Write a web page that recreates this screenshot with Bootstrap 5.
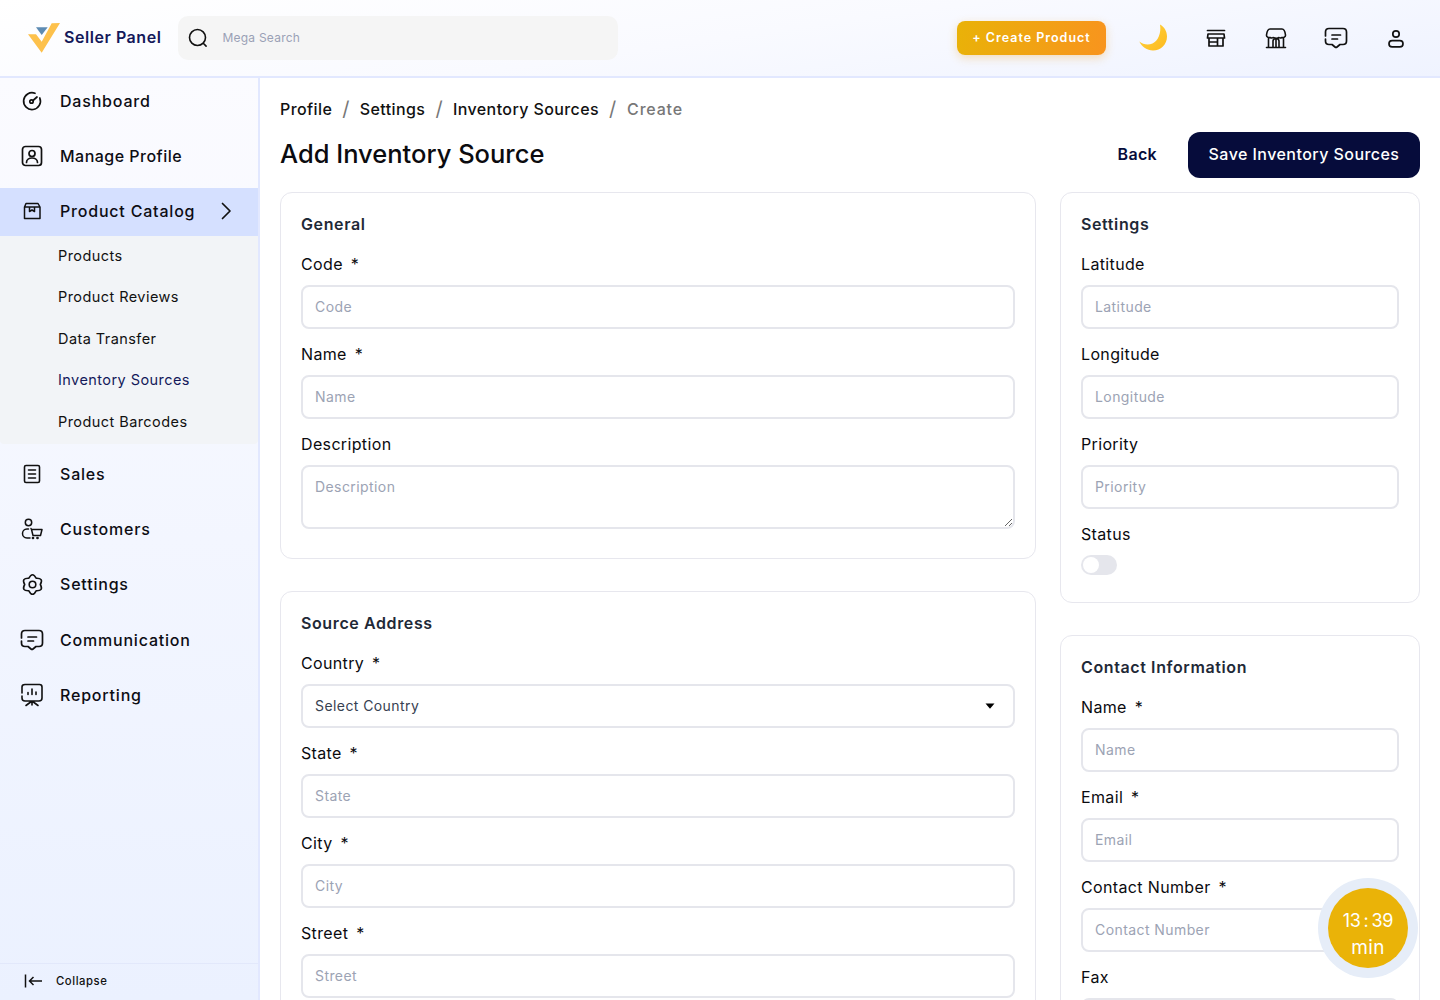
<!DOCTYPE html>
<html lang="en">
<head>
<meta charset="utf-8">
<title>Add Inventory Source</title>
<link href="https://cdn.jsdelivr.net/npm/bootstrap@5.3.0/dist/css/bootstrap.min.css" rel="stylesheet">
<style>
html,body{height:1000px;overflow:hidden}
body{font-family:"Inter","Liberation Sans",sans-serif;color:#0b0b0f;background:#fff;font-size:16px;letter-spacing:.028em}
.topbar{height:78px;border-bottom:2px solid #e2e8ff;background:linear-gradient(172deg,#fff 0%,#f9faff 50%,#eff3ff 100%);padding:0 32px 0 28px}
.brand-name{font-size:16px;font-weight:600;color:#14195a;margin-left:4px;letter-spacing:.034em;padding-bottom:2px}
.mega{width:440px;height:44px;background:#f5f5f5;border-radius:10px;margin-left:17px;padding-left:10px;gap:14px}
.mega span{font-size:12px;color:#9aa1b5;letter-spacing:.02em}
.create-btn{width:149px;height:34px;border:0;border-radius:8px;background:linear-gradient(100deg,#e9b208,#f8941e);color:#fff;font-size:12.5px;font-weight:600;letter-spacing:.08em;box-shadow:0 3px 10px rgba(240,160,30,.3);padding:0}
.top-icons{margin-left:33px;gap:36px}
.top-icons svg{display:block}
.moon-ic{margin-right:1px}
.shell{height:922px}
.sidebar{width:260px;flex:none;border-right:2px solid #e2e8ff;background:linear-gradient(180deg,#fbfbff,#ebf1ff)}
.side-list{margin-top:-1px;gap:7.33px}
.side-link{height:48px;padding-left:20px;gap:16px;color:#0d0d14;font-weight:500;font-size:16px;text-decoration:none;letter-spacing:.05em}
.side-link svg{flex:none}
.side-link.on{background:#d5e0ff;padding-bottom:1px}
.tight-text{letter-spacing:.03em}
.side-chev{margin-left:9px}
.sub-panel{background:#f2f4f7;height:208px;margin-top:-7.33px;margin-bottom:-1.3px;border-radius:0 0 4px 4px}
.sub-link{height:41.6px;padding-left:58px;padding-bottom:2px;font-size:14.5px;color:#111;text-decoration:none;letter-spacing:.03em}
.sub-link.on{color:#14195a}
.side-foot{height:37px;border-top:1px solid #e2e8fb;padding-left:24px;padding-bottom:2px;gap:14px;font-size:11.3px;font-weight:500;letter-spacing:.05em;color:#111}
.content{padding:21px 20px 0;min-width:0;overflow:hidden}
.crumbs{margin:0;font-size:16px;font-weight:500;line-height:20px;--bs-breadcrumb-divider-color:#777;--bs-breadcrumb-item-padding-x:10px;letter-spacing:.025em}
.crumbs .breadcrumb-item::before{font-size:20px;font-weight:400;line-height:20px}
.crumbs .breadcrumb-item{color:#111}
.crumbs .breadcrumb-item.active{color:#777;letter-spacing:.05em}
.head-row{height:46px;margin-top:13px;margin-bottom:14px}
.page-title{font-size:25.5px;font-weight:500;margin:0;letter-spacing:0;color:#0b0b0f;padding-bottom:2px}
.back-btn{background:none;border:0;font-weight:600;color:#060c3b;font-size:16px;margin-right:31px;padding:0 0 2px;letter-spacing:.02em}
.save-btn{width:232px;height:46px;border:0;padding:0 0 2px;background:#060c3b;color:#fff;border-radius:12px;font-weight:500;font-size:16px;letter-spacing:.028em}
.cols{gap:24px}
.col-main{width:756px;flex:none;gap:32px}
.col-side{width:360px;flex:none;gap:32px}
.panel{border:1px solid #e7e7ee;border-radius:12px;padding:20px 20px 7px;box-shadow:none;--bs-card-bg:#fff}
.panel-title{font-size:16px;font-weight:600;line-height:22px;color:#1f2937;margin:0 0 4px;letter-spacing:.038em}
.fld-label{display:block;margin:13px 0 9px;line-height:24px;font-size:16px;color:#0b0b0f;letter-spacing:.022em}
.fld-label i{font-style:normal;margin-left:3px}
.fld{height:44px;border:2px solid #e5e6ec;border-radius:8px;font-size:14px;padding:0 12px 2px;color:#374151;letter-spacing:.03em;box-shadow:none}
.fld::placeholder{color:#9ca3b4;opacity:1}
textarea.fld{height:64px;padding-top:9px}
.pick{background-size:10px 6px;background-position:right 18px center;background-image:url("data:image/svg+xml,%3Csvg xmlns='http://www.w3.org/2000/svg' viewBox='0 0 12 8'%3E%3Cpath d='M0 .5h12L6 7.500z' fill='%23000'/%3E%3C/svg%3E")}
.tgl{width:36px;height:20px;border-radius:10px;background:#e5e6ec;margin-bottom:20px;position:relative}
.tgl::after{content:"";position:absolute;left:2px;top:2px;width:16px;height:16px;border-radius:50%;background:#fff}
.fld-end{margin-bottom:22px}
.timer{position:fixed;left:1318px;top:878px;width:100px;height:100px;border-radius:50%;background:#e6edf8}
.timer-in{width:80px;height:80px;border-radius:50%;background:#eab308;color:#fff;font-size:19px;line-height:27px;letter-spacing:.02em;padding-top:11px}
.timer-clock{font-size:18px;letter-spacing:-.2px;word-spacing:-2px}
</style>
</head>
<body>
<header class="topbar d-flex align-items-center">
  <svg width="32" height="30" viewBox="0 0 32 30"><path d="M8 4.300h11.700L13.700 12z" fill="#5d8bb3"/><path d="M0 11.300h8l5.700 7.400L23.700.3 32 0 13.700 29.700z" fill="#fdc14c"/></svg>
  <span class="brand-name">Seller Panel</span>
  <div class="mega d-flex align-items-center">
    <svg width="20" height="20" viewBox="0 0 20 20" fill="none" stroke="#111" stroke-width="1.6" stroke-linecap="round"><circle cx="9.500" cy="9.500" r="8"/><path d="M15.500 15.500l2.600 2.600"/></svg>
    <span>Mega Search</span>
  </div>
  <div class="ms-auto d-flex align-items-center">
    <button class="create-btn" type="button">+ Create Product</button>
    <div class="top-icons d-flex align-items-center">
      <svg class="moon-ic" width="28" height="28" viewBox="0 0 28 28"><defs><linearGradient id="mn" x1="0" y1="0" x2="1" y2="1"><stop offset="0" stop-color="#ffd43f"/><stop offset="1" stop-color="#fdb91f"/></linearGradient></defs><path d="M21 .5C25.500 3 28 7.500 28 12.500 28 20.500 21.800 26.500 14 26.500 8 26.500 3 23 .3 17.500 4 20.500 9 21.500 13.500 19.500 19 17 22.500 9 21 .5z" fill="url(#mn)"/></svg>
      <svg width="24" height="24" viewBox="0 0 24 24" fill="none" stroke="#111" stroke-width="1.700" stroke-linecap="round" stroke-linejoin="round"><path d="M3.500 4.500h17M4 8h16l.5 4h-17zM5 12v8h14v-8M5 16h8.500v-4M13.500 16v4M5 16v4"/></svg>
      <svg width="24" height="24" viewBox="0 0 24 24" fill="none" stroke="#111" stroke-width="1.600" stroke-linecap="round" stroke-linejoin="round"><path d="M2.500 21.500h19M4.500 21.500V12M19.500 21.500V12M6 3h12c1.500 0 3 2 3.500 6 .2 2-2 3-3.500 2.500-1 .5-2.500.5-3 0-1 .7-4 .7-6 0-.5.500-2 .5-3 0-1.500.5-3.700-.500-3.500-2.500C3 5 4.500 3 6 3zM9 21.500V15c0-3 6-3 6 0v6.500M12 14v7.500"/></svg>
      <svg width="24" height="24" viewBox="0 0 24 24" fill="none" stroke="#111" stroke-width="1.700" stroke-linecap="round" stroke-linejoin="round"><path d="M5 2.500h14c2 0 3.500 1.500 3.500 3.500v9c0 2-1.500 3.500-3.500 3.500h-3l-3 2.500c-.6.500-1.400.5-2 0l-3-2.500H5c-2 0-3.500-1.500-3.500-3.500v-2M1.500 10V6C1.500 4 3 2.500 5 2.500M8 9h8.500M8 13h5.500"/></svg>
      <svg width="24" height="24" viewBox="0 0 24 24" fill="none" stroke="#111" stroke-width="1.700"><circle cx="12" cy="8" r="3.200"/><rect x="5" y="14.600" width="14" height="6.200" rx="3.100"/></svg>
    </div>
  </div>
</header>
<div class="shell d-flex">
  <aside class="sidebar d-flex flex-column">
    <nav class="side-list d-flex flex-column flex-grow-1">
      <a class="side-link d-flex align-items-center" href="#"><svg width="24" height="24" viewBox="0 0 24 24" fill="none" stroke="#111" stroke-width="1.700" stroke-linecap="round"><path d="M15 4.300A8.400 8.400 0 1 0 19.800 9"/><circle cx="11.500" cy="12.500" r="1.700"/><path d="M13 11.500l4-3.500"/></svg>Dashboard</a>
      <a class="side-link d-flex align-items-center" href="#"><svg width="24" height="24" viewBox="0 0 24 24" fill="none" stroke="#111" stroke-width="1.700" stroke-linecap="round"><rect x="2.500" y="2.500" width="19" height="19" rx="3"/><circle cx="12" cy="9.500" r="3"/><path d="M6.500 18.500c0-6 11-6 11 0"/></svg><span class="tight-text">Manage Profile</span></a>
      <a class="side-link on d-flex align-items-center" href="#"><svg width="24" height="24" viewBox="0 0 24 24" fill="none" stroke="#111" stroke-width="1.500" stroke-linejoin="round"><path d="M6 4.500h12l2 3.500v11.500H4.500V8zM4.500 8h15.500M9.500 8v4.500l2.500-1.500 2.500 1.500V8"/></svg>Product Catalog<svg class="side-chev" width="12" height="18" viewBox="0 0 12 18" fill="none" stroke="#111" stroke-width="1.700" stroke-linecap="round" stroke-linejoin="round"><path d="M2.500 1.500L10 9l-7.500 7.500"/></svg></a>
      <div class="sub-panel d-flex flex-column">
        <a class="sub-link d-flex align-items-center" href="#">Products</a>
        <a class="sub-link d-flex align-items-center" href="#">Product Reviews</a>
        <a class="sub-link d-flex align-items-center" href="#">Data Transfer</a>
        <a class="sub-link on d-flex align-items-center" href="#">Inventory Sources</a>
        <a class="sub-link d-flex align-items-center" href="#">Product Barcodes</a>
      </div>
      <a class="side-link d-flex align-items-center" href="#"><svg width="24" height="24" viewBox="0 0 24 24" fill="none" stroke="#111" stroke-width="1.600" stroke-linecap="round" stroke-linejoin="round"><rect x="4.500" y="3.500" width="15" height="17" rx="1.500"/><path d="M8.500 8h7M8.500 12h7M8.500 16h7"/></svg>Sales</a>
      <a class="side-link d-flex align-items-center" href="#"><svg width="24" height="24" viewBox="0 0 24 24" fill="none" stroke="#111" stroke-width="1.500" stroke-linecap="round" stroke-linejoin="round"><circle cx="8.500" cy="5.500" r="3.200"/><path d="M8.500 12H7c-6 0-6 9 0 9h3M11.500 12.500h10.500l-1.500 6h-7.500zM11.500 12.500l-.500-1"/><circle cx="13" cy="21" r=".6"/><circle cx="17.500" cy="21" r=".6"/></svg>Customers</a>
      <a class="side-link d-flex align-items-center" href="#"><svg width="24" height="24" viewBox="0 0 24 24" fill="none" stroke="#111" stroke-width="1.600" stroke-linecap="round" stroke-linejoin="round"><circle cx="12.500" cy="12.500" r="3.300"/><path d="M8.900 6.200Q12.500-.8 16.100 6.200Q24 5.800 20.300 12.500Q24 19.200 16.100 18.800Q12.500 25.800 8.900 18.800Q1 19.200 4.700 12.500Q1 5.800 8.900 6.200z"/></svg>Settings</a>
      <a class="side-link d-flex align-items-center" href="#"><svg width="24" height="24" viewBox="0 0 24 24" fill="none" stroke="#111" stroke-width="1.700" stroke-linecap="round" stroke-linejoin="round"><path d="M5 2.500h14c2 0 3.500 1.500 3.500 3.500v9c0 2-1.500 3.500-3.500 3.500h-3l-3 2.500c-.6.500-1.400.5-2 0l-3-2.500H5c-2 0-3.500-1.500-3.500-3.500v-2M1.500 10V6C1.500 4 3 2.500 5 2.500M8 9h8.500M8 13h5.500"/></svg>Communication</a>
      <a class="side-link d-flex align-items-center" href="#"><svg width="24" height="24" viewBox="0 0 24 24" fill="none" stroke="#111" stroke-width="1.600" stroke-linecap="round" stroke-linejoin="round"><path d="M5 1.500h14.500c1.500 0 2.500 1 2.500 2.500v11c0 2-1 3-3 3H5c-2 0-3-1-3-3v-2M2 10V4c0-1.500 1-2.500 3-2.500M8 11.500V9.500M12 11.500V6M16 11.500V9M12 18v4M12 18l-6 4.500M12 18l6 4.500"/></svg>Reporting</a>
    </nav>
    <div class="side-foot d-flex align-items-center">
      <svg width="18" height="14" viewBox="1 0 18 14" fill="none" stroke="#111" stroke-width="1.500"><path d="M2.500 .5v13M19 7H6.500M10.500 3L6.500 7l4 4"/></svg>
      <span>Collapse</span>
    </div>
  </aside>
  <main class="content flex-grow-1">
    <nav aria-label="breadcrumb">
      <ol class="breadcrumb crumbs">
        <li class="breadcrumb-item">Profile</li>
        <li class="breadcrumb-item">Settings</li>
        <li class="breadcrumb-item">Inventory Sources</li>
        <li class="breadcrumb-item active" aria-current="page">Create</li>
      </ol>
    </nav>
    <div class="head-row d-flex align-items-center justify-content-between">
      <h1 class="page-title">Add Inventory Source</h1>
      <div class="d-flex align-items-center">
        <button class="back-btn" type="button">Back</button>
        <button class="save-btn" type="button">Save Inventory Sources</button>
      </div>
    </div>
    <div class="cols d-flex align-items-start">
      <div class="col-main d-flex flex-column">
        <section class="card panel">
          <h2 class="panel-title">General</h2>
          <label class="fld-label">Code <i>*</i></label>
          <input class="form-control fld" placeholder="Code">
          <label class="fld-label">Name <i>*</i></label>
          <input class="form-control fld" placeholder="Name">
          <label class="fld-label">Description</label>
          <textarea class="form-control fld fld-end" placeholder="Description"></textarea>
        </section>
        <section class="card panel">
          <h2 class="panel-title">Source Address</h2>
          <label class="fld-label">Country <i>*</i></label>
          <select class="form-select fld pick"><option>Select Country</option></select>
          <label class="fld-label">State <i>*</i></label>
          <input class="form-control fld" placeholder="State">
          <label class="fld-label">City <i>*</i></label>
          <input class="form-control fld" placeholder="City">
          <label class="fld-label">Street <i>*</i></label>
          <input class="form-control fld fld-end" placeholder="Street">
        </section>
      </div>
      <div class="col-side d-flex flex-column">
        <section class="card panel">
          <h2 class="panel-title">Settings</h2>
          <label class="fld-label">Latitude</label>
          <input class="form-control fld" placeholder="Latitude">
          <label class="fld-label">Longitude</label>
          <input class="form-control fld" placeholder="Longitude">
          <label class="fld-label">Priority</label>
          <input class="form-control fld" placeholder="Priority">
          <label class="fld-label">Status</label>
          <div class="tgl"></div>
        </section>
        <section class="card panel">
          <h2 class="panel-title">Contact Information</h2>
          <label class="fld-label">Name <i>*</i></label>
          <input class="form-control fld" placeholder="Name">
          <label class="fld-label">Email <i>*</i></label>
          <input class="form-control fld" placeholder="Email">
          <label class="fld-label">Contact Number <i>*</i></label>
          <input class="form-control fld" placeholder="Contact Number">
          <label class="fld-label">Fax</label>
          <input class="form-control fld fld-end" placeholder="Fax">
        </section>
      </div>
    </div>
  </main>
</div>
<div class="timer d-flex align-items-center justify-content-center">
  <div class="timer-in d-flex flex-column align-items-center justify-content-center"><span class="timer-clock">13 : 39</span><span>min</span></div>
</div>
<script src="https://cdn.jsdelivr.net/npm/bootstrap@5.3.0/dist/js/bootstrap.bundle.min.js"></script>
</body>
</html>
